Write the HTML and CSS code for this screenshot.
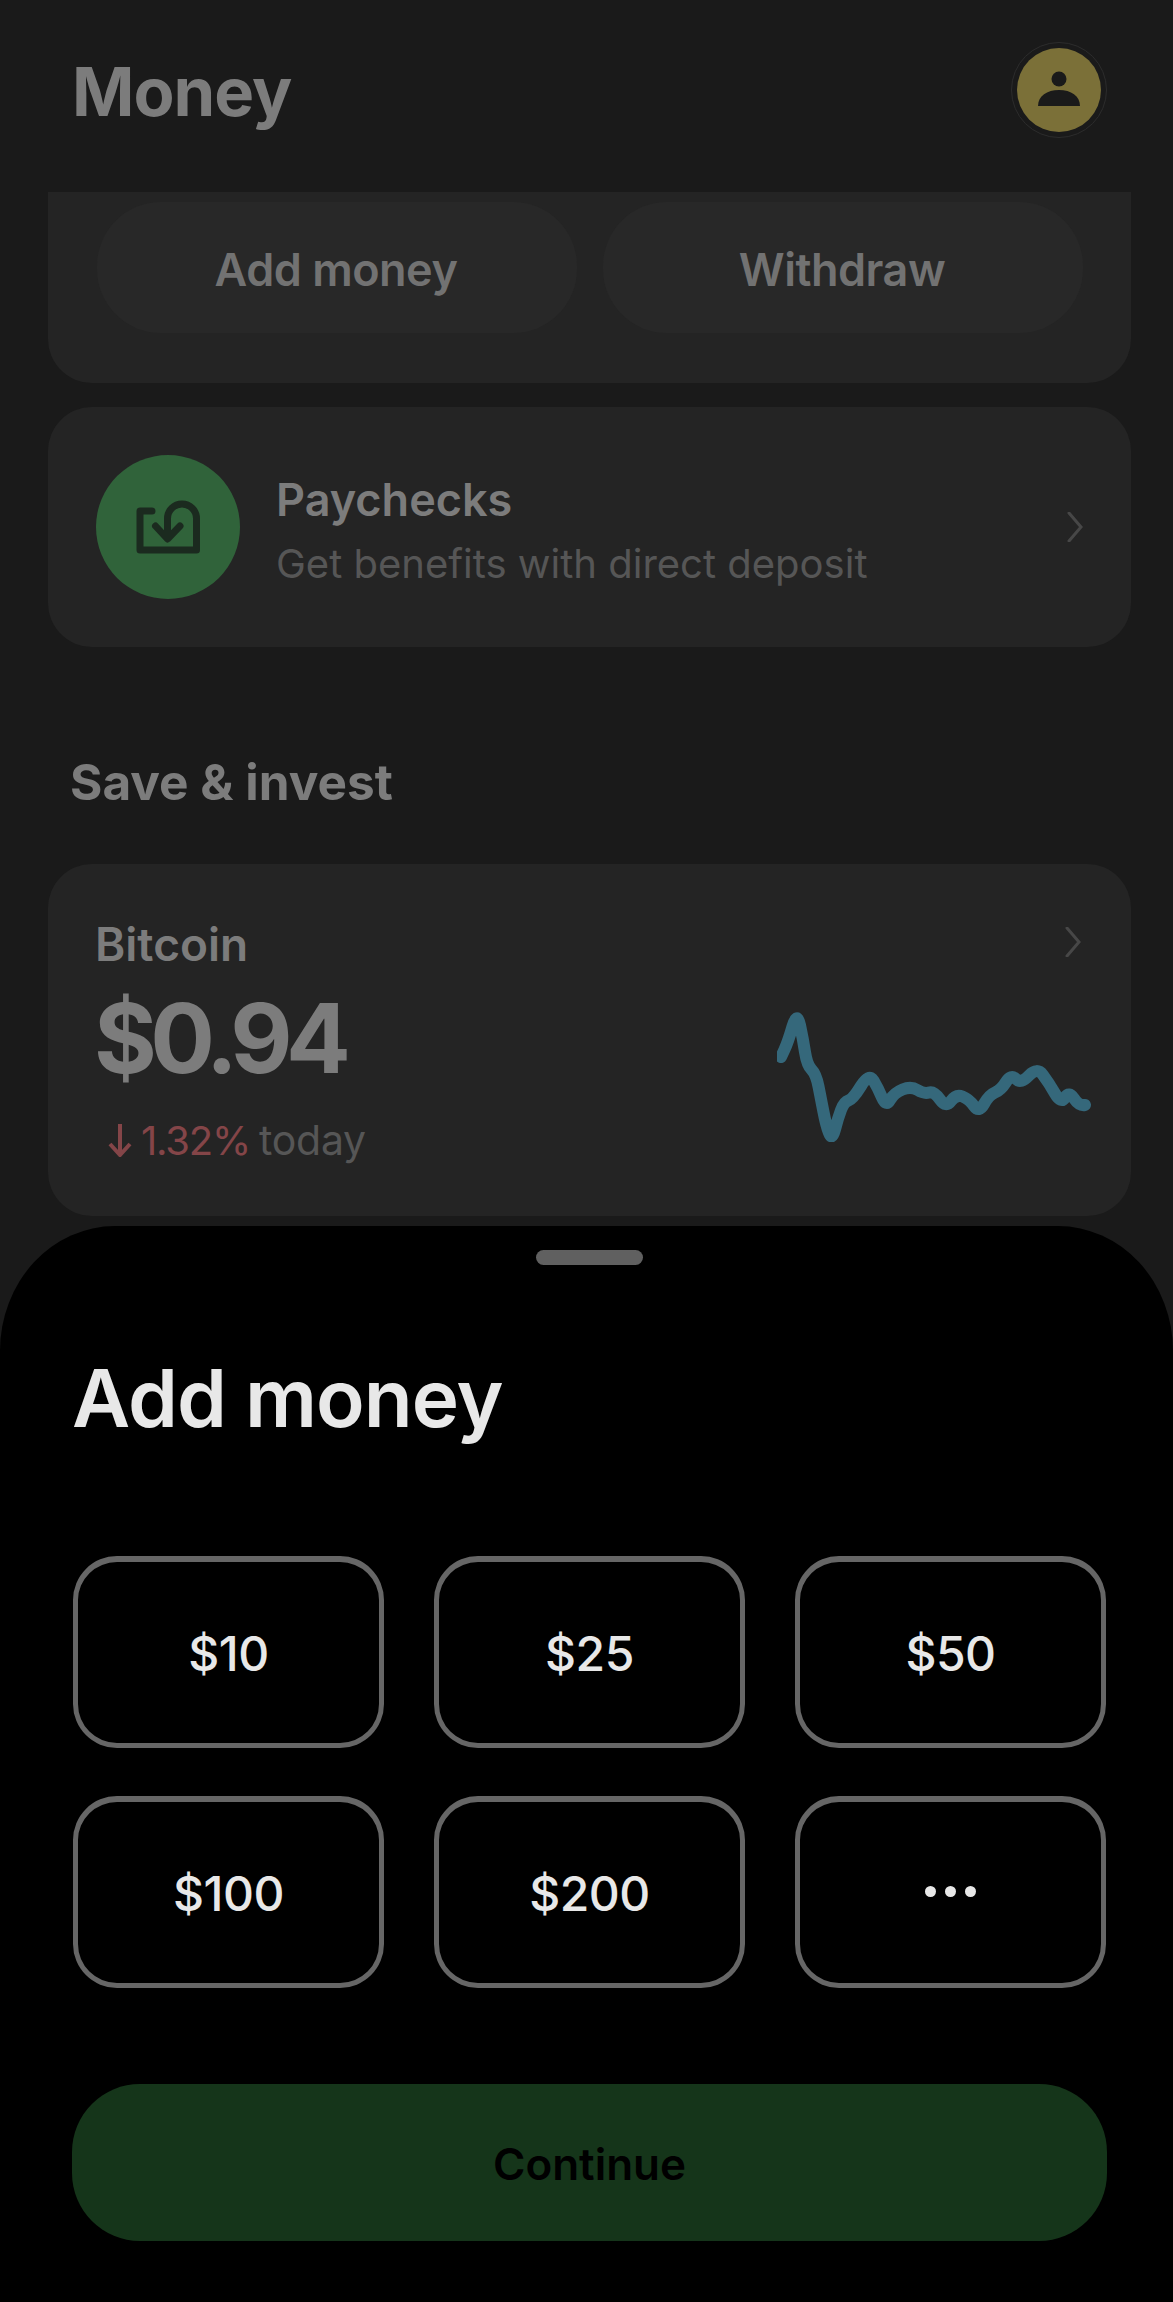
FILE: index.html
```html
<!DOCTYPE html>
<html lang="en">

<head>
    <meta charset="UTF-8">
    <meta name="viewport" content="width=device-width, initial-scale=1.0">
    <title>Money</title>

    <link rel="stylesheet" href="styles.css">
</head>

<body>
    <div class="main">
        <div class="header">
            <h1>Money</h1>
            <div class="avatarRing">
                <div class="avatar">
                    <svg width="44" height="48" viewBox="0 0 44 48">
                        <circle cx="22" cy="8" r="7.5" />
                        <path d="M1 35 C1 25 10 19 22 19 C34 19 43 25 43 35 Z" />
                    </svg>
                </div>
            </div>
        </div>

        <div class="card balanceCard">
            <div class="pill">Add money</div>
            <div class="pill">Withdraw</div>
        </div>

        <div class="card paycheckCard">
            <div class="greenCircle">
                <svg width="66" height="58" viewBox="0 0 66 58">
                    <path d="M17 13 H5 V52 H61.5 V20.5 a14.5 14.5 0 0 0 -29 0 V40 M20.5 28 L32.5 41 L45 28" />
                </svg>
            </div>
            <div class="paycheckText">
                <div class="cardTitle">Paychecks</div>
                <div class="cardSub">Get benefits with direct deposit</div>
            </div>
            <svg class="chevron" width="16" height="30" viewBox="0 0 16 30">
                <path d="M2 1 L14 15 L2 29" />
            </svg>
        </div>

        <h2>Save &amp; invest</h2>

        <div class="card bitcoinCard">
            <div class="bitcoinText">
                <div class="bitcoinName">Bitcoin</div>
                <div class="bitcoinPrice">$0.94</div>
                <div class="change">
                    <svg width="24" height="34" viewBox="0 0 24 34">
                        <path d="M12 1 V31 M2 21 L12 32 L22 21" />
                    </svg>
                    <span class="changeRed">1.32%</span>
                    <span class="changeGray">today</span>
                </div>
            </div>
            <div class="bitcoinRight">
                <svg class="chevron" width="16" height="30" viewBox="0 0 16 30">
                    <path d="M2 1 L14 15 L2 29" />
                </svg>
                <svg class="spark" width="320" height="135" viewBox="0 0 320 135">
                    <path d="M4 50 L7.5 42.5 Q11 35 15.5 19.5 Q20 4 23 18 Q26 32 28 45 Q30 58 34.5 62.5 Q39 67 41.5 79.5 Q44 92 46.5 105 Q49 118 52 126 Q55 134 58 122.5 Q61 111 64 103 Q67 95 71.5 93.5 Q76 92 84 79 Q92 66 96.5 73.5 Q101 81 105 90.5 Q109 100 113 93 Q117 86 125.5 82.5 Q134 79 140.5 83 Q147 87 152 85.5 Q157 84 163 92.5 Q169 101 174 94 Q179 87 185.5 89.5 Q192 92 197 99 Q202 106 207 97 Q212 88 218 85.5 Q224 83 229 75 Q234 67 239 72 Q244 77 252 68.5 Q260 60 266 68 Q272 76 278 86.5 Q284 97 288 90.5 Q292 84 297 91.5 Q302 99 308 98" />
                </svg>
            </div>
        </div>

        <div class="sheet">
            <div class="handle"></div>
            <div class="sheetTitle">Add money</div>
            <div class="amounts">
                <div class="amount">$10</div>
                <div class="amount">$25</div>
                <div class="amount">$50</div>
                <div class="amount">$100</div>
                <div class="amount">$200</div>
                <div class="amount">
                    <span class="dot"></span><span class="dot"></span><span class="dot"></span>
                </div>
            </div>
            <div class="continueBtn">Continue</div>
        </div>
    </div>
</body>

</html>
```

FILE: styles.css
```css
* {
    box-sizing: border-box;
}

body {
    margin: 0;
    background-color: #1a1a1a;
    font-family: "Inter", "Liberation Sans", sans-serif;
}

h1,
h2 {
    margin: 0;
    color: #7c7c7c;
    font-weight: 700;
}

.main {
    width: 100%;
    height: 2302px;
    overflow: hidden;
    display: flex;
    flex-direction: column;
}

.header {
    height: 192px;
    padding: 0 66px 12px 72px;
    display: flex;
    justify-content: space-between;
    align-items: center;
}

h1 {
    font-size: 67px;
    letter-spacing: -1px;
    padding-top: 3px;
}

.avatarRing {
    width: 96px;
    height: 96px;
    border: 1px solid #2c2c2c;
    border-radius: 50%;
    display: flex;
    justify-content: center;
    align-items: center;
}

.avatar {
    width: 84px;
    height: 84px;
    background-color: #7b7038;
    border-radius: 50%;
    display: flex;
    justify-content: center;
    align-items: center;
}

.avatar svg {
    fill: #1a1a1a;
    margin-top: 10px;
}

.card {
    margin: 0 42px 0 48px;
    background-color: #242424;
    border-radius: 44px;
}

.balanceCard {
    height: 191px;
    padding: 10px 48px 0 49px;
    border-radius: 0 0 44px 44px;
    display: flex;
    gap: 26px;
}

.pill {
    flex: 1;
    height: 131px;
    padding: 4px 2px 0 0;
    background-color: #282828;
    border-radius: 64px;
    color: #727272;
    font-size: 45px;
    font-weight: 600;
    letter-spacing: -0.5px;
    display: flex;
    justify-content: center;
    align-items: center;
}

.paycheckCard {
    height: 240px;
    margin-top: 24px;
    padding: 0 48px;
    display: flex;
    align-items: center;
}

.greenCircle {
    width: 144px;
    height: 144px;
    background-color: #30633a;
    border-radius: 50%;
    display: flex;
    justify-content: center;
    align-items: center;
}

.greenCircle svg path {
    fill: none;
    stroke: #1b2a1f;
    stroke-width: 7;
    stroke-linecap: round;
    stroke-linejoin: round;
}

.paycheckText {
    flex: 1;
    margin-left: 36px;
    padding-top: 12px;
}

.cardTitle {
    color: #7c7c7c;
    font-size: 45px;
    font-weight: 600;
    line-height: 62px;
}

.cardSub {
    color: #565656;
    font-size: 40px;
    line-height: 66px;
}

.chevron path {
    fill: none;
    stroke: #474747;
    stroke-width: 3;
    stroke-linecap: round;
}

h2 {
    margin: 105px 0 0 70px;
    font-size: 49.5px;
    line-height: 60px;
    height: 112px;
}

.bitcoinCard {
    height: 352px;
    padding: 50px 42px 0 47px;
    display: flex;
    justify-content: space-between;
}

.bitcoinName {
    color: #7c7c7c;
    font-size: 46px;
    font-weight: 600;
    line-height: 60px;
}

.bitcoinPrice {
    margin: 9px 0 0 -1px;
    color: #7c7c7c;
    font-size: 96px;
    font-weight: 700;
    letter-spacing: -6.5px;
    line-height: 110px;
}

.change {
    margin-top: 22px;
    padding-left: 13px;
    display: flex;
    align-items: center;
    gap: 9px;
    font-size: 40px;
}

.change svg path {
    fill: none;
    stroke: #844548;
    stroke-width: 4;
}

.changeRed {
    color: #844548;
    letter-spacing: -1.2px;
}

.changeGray {
    color: #565656;
    font-size: 41px;
    letter-spacing: -0.3px;
}

.bitcoinRight {
    display: flex;
    flex-direction: column;
    align-items: flex-end;
}

.bitcoinRight .chevron {
    margin: 13px 8px 0 0;
}

.spark {
    margin: 50px -8px 0 0;
}

.spark path {
    fill: none;
    stroke: #35687b;
    stroke-width: 12;
    stroke-linecap: round;
    stroke-linejoin: round;
}

.sheet {
    flex: 1;
    margin-top: 10px;
    padding: 24px 66px 0 72px;
    background-color: #000;
    border-radius: 115px 115px 0 0 / 125px 125px 0 0;
}

.handle {
    width: 107px;
    height: 15px;
    margin: 0 auto;
    background-color: #606060;
    border-radius: 8px;
}

.sheetTitle {
    margin-top: 83px;
    height: 208px;
    color: #e8e8e8;
    font-size: 80px;
    font-weight: 600;
    letter-spacing: -1px;
    line-height: 100px;
}

.amounts {
    margin: 0 1px 0 1px;
    display: grid;
    grid-template-columns: repeat(3, 1fr);
    grid-auto-rows: 192px;
    column-gap: 50px;
    row-gap: 48px;
}

.amount {
    padding-top: 2px;
    border: 5px solid #666;
    border-top-width: 6px;
    border-radius: 44px;
    color: #e8e8e8;
    font-size: 48px;
    font-weight: 500;
    letter-spacing: -0.5px;
    display: flex;
    justify-content: center;
    align-items: center;
    gap: 9px;
}

.dot {
    width: 11px;
    height: 11px;
    margin-top: -4px;
    background-color: #e8e8e8;
    border-radius: 50%;
}

.continueBtn {
    height: 157px;
    margin-top: 96px;
    padding-top: 2px;
    background-color: #15351a;
    border-radius: 68px;
    color: #000;
    font-size: 44px;
    font-weight: 600;
    display: flex;
    justify-content: center;
    align-items: center;
}
```
